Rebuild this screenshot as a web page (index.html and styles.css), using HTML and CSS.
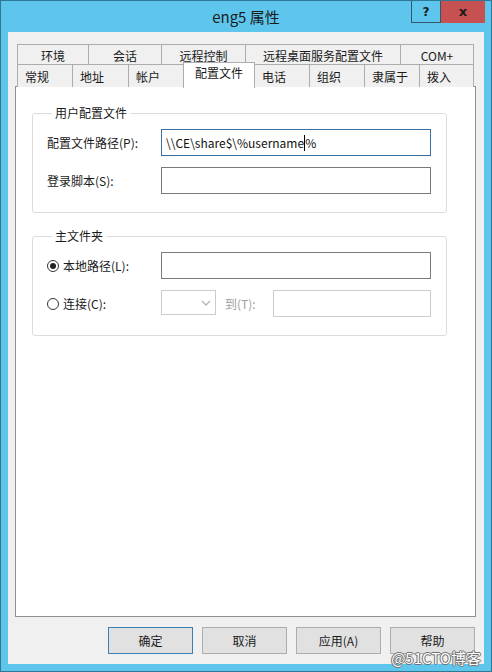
FILE: index.html
```html
<!DOCTYPE html>
<html lang="zh-CN">
<head>
    <meta charset="UTF-8">
    <title>eng5 属性</title>
    <link rel="stylesheet" href="styles.css">
</head>
<body>
    <div class="window">
        <div class="titlebar">
            <span class="title">eng5 属性</span>
            <div class="caption-buttons">
                <div class="cap-btn help">?</div>
                <div class="cap-btn close">x</div>
            </div>
        </div>

        <div class="client">
            <div class="tabs">
                <div class="tab-row">
                    <div class="tab w71">环境</div>
                    <div class="tab w73">会话</div>
                    <div class="tab w84">远程控制</div>
                    <div class="tab w155">远程桌面服务配置文件</div>
                    <div class="tab w73">COM+</div>
                </div>
                <div class="tab-row front">
                    <div class="tab w55">常规</div>
                    <div class="tab w56">地址</div>
                    <div class="tab w55">帐户</div>
                    <div class="tab w71 active">配置文件</div>
                    <div class="tab w55">电话</div>
                    <div class="tab w55">组织</div>
                    <div class="tab w55">隶属于</div>
                    <div class="tab w54">拨入</div>
                </div>
            </div>

            <div class="panel">
                <fieldset class="group">
                    <legend>用户配置文件</legend>
                    <div class="field">
                        <label>配置文件路径(P):</label>
                        <div class="textbox focused">\\CE\share$\%username<span class="caret"></span>%</div>
                    </div>
                    <div class="field">
                        <label>登录脚本(S):</label>
                        <div class="textbox"></div>
                    </div>
                </fieldset>

                <fieldset class="group">
                    <legend>主文件夹</legend>
                    <div class="field">
                        <label class="radio"><span class="dot checked"></span>本地路径(L):</label>
                        <div class="textbox"></div>
                    </div>
                    <div class="field">
                        <label class="radio"><span class="dot"></span>连接(C):</label>
                        <div class="combo disabled">
                            <svg width="10" height="6" viewBox="0 0 10 6"><path d="M1 1 L5 5 L9 1" fill="none" stroke="#b4b4b4" stroke-width="1.3"/></svg>
                        </div>
                        <span class="to-label">到(T):</span>
                        <div class="textbox disabled short"></div>
                    </div>
                </fieldset>
            </div>

            <div class="button-row">
                <button class="default">确定</button>
                <button>取消</button>
                <button>应用(A)</button>
                <button>帮助</button>
            </div>
        </div>

        <div class="watermark">@51CTO博客</div>
    </div>
</body>
</html>
```

FILE: styles.css
```css
* {
    margin: 0;
    padding: 0;
    box-sizing: border-box;
}

body {
    font-family: "Noto Sans CJK SC", "Noto Sans", sans-serif;
    font-size: 12px;
    color: #1a1a1a;
    background: #fff;
}

.window {
    position: relative;
    width: 492px;
    height: 672px;
    background: #5ec6ec;
    border: 1px solid #2e7894;
    display: flex;
    flex-direction: column;
}

.titlebar {
    position: relative;
    height: 31px;
    display: flex;
    align-items: center;
    justify-content: center;
}

.title {
    font-size: 15px;
    color: #1b1b1b;
    margin-top: -1px;
}

.caption-buttons {
    position: absolute;
    top: 0;
    right: 6px;
    display: flex;
}

.cap-btn {
    height: 22px;
    display: flex;
    align-items: center;
    justify-content: center;
    font-family: "DejaVu Sans", sans-serif;
    font-weight: bold;
    font-size: 12px;
    color: #1d1d1d;
}

.cap-btn.help {
    width: 30px;
    border: 1px solid #34566a;
    border-top: none;
}

.cap-btn.close {
    width: 44px;
    background: #c75050;
    font-size: 13px;
    padding-bottom: 2px;
}

.client {
    flex: 1;
    margin: 0 7px 7px 7px;
    background: #f0f0f0;
    padding: 12px 8px 0 7px;
    display: flex;
    flex-direction: column;
}

.tabs {
    margin-left: 2px;
    position: relative;
    z-index: 1;
}

.tab-row {
    display: flex;
    height: 21px;
}

.tab-row.front {
    height: 22px;
}

.tab {
    border: 1px solid #adadad;
    border-bottom: none;
    margin-left: -1px;
    background: #f0f0f0;
    display: flex;
    justify-content: center;
    align-items: center;
    line-height: 1;
    padding-top: 1px;
}

.tab:first-child {
    margin-left: 0;
}

.tab-row.front .tab {
    margin-top: -1px;
    height: 23px;
    justify-content: flex-start;
    padding-left: 7px;
}

.tab-row.front .tab.active {
    background: #fff;
    height: 26px;
    margin-top: -3px;
    padding-left: 0;
    justify-content: center;
    padding-bottom: 6px;
}

.w54 { width: 55px; }
.w55 { width: 56px; }
.w56 { width: 57px; }
.w71 { width: 72px; }
.w73 { width: 74px; }
.w84 { width: 85px; }
.w155 { width: 156px; }

.panel {
    height: 531px;
    margin-top: -1px;
    background: #fff;
    border: 1px solid #8e8f8f;
    padding: 18px 28px 0 16px;
}

.group {
    border: 1px solid #dcdcdc;
    border-radius: 3px;
    padding: 8px 15px 18px 14px;
    margin-bottom: 15px;
}

.group legend {
    margin-left: 5px;
    padding: 0 3px;
    line-height: 16px;
}

.field {
    display: flex;
    align-items: center;
    margin-bottom: 11px;
}

.field:last-child {
    margin-bottom: 0;
}

.field label {
    width: 114px;
    flex: none;
    display: flex;
    align-items: center;
}

.textbox {
    flex: 1;
    height: 27px;
    border: 1px solid #7a7a7a;
    padding: 0 4px;
    display: flex;
    align-items: center;
    font-size: 12px;
    color: #111;
    white-space: pre;
}

.textbox.focused {
    border-color: #3a6f9f;
}

.caret {
    display: inline-block;
    width: 1px;
    height: 16px;
    background: #000;
}

.textbox.disabled {
    border-color: #cccccc;
}

.radio .dot {
    width: 12px;
    height: 12px;
    border: 1px solid #333;
    border-radius: 50%;
    margin-right: 4px;
    display: flex;
    align-items: center;
    justify-content: center;
}

.radio .dot.checked::after {
    content: "";
    width: 6px;
    height: 6px;
    border-radius: 50%;
    background: #222;
}

.combo {
    width: 55px;
    height: 25px;
    border: 1px solid #cccccc;
    display: flex;
    align-items: center;
    justify-content: flex-end;
    padding-right: 4px;
    align-self: flex-start;
}

.to-label {
    width: 57px;
    padding-left: 9px;
    color: #a0a0a0;
}

.textbox.short {
    flex: none;
    width: 158px;
}

.button-row {
    display: flex;
    justify-content: flex-end;
    gap: 9px;
    margin-top: 10px;
    padding-right: 1px;
}

.button-row button {
    width: 85px;
    height: 27px;
    background: #e1e1e1;
    border: 1px solid #adadad;
    font-family: inherit;
    font-size: 12px;
    line-height: 1;
    color: #1a1a1a;
}

.button-row button.default {
    border-color: #3c7fb1;
}

.watermark {
    position: absolute;
    right: 10px;
    bottom: 6px;
    font-size: 15px;
    line-height: 1;
    color: #fff;
    text-shadow: 0 0 1px #555, 1px 0 0 #777, -1px 0 0 #777, 0 1px 0 #777, 0 -1px 0 #777;
}
```
